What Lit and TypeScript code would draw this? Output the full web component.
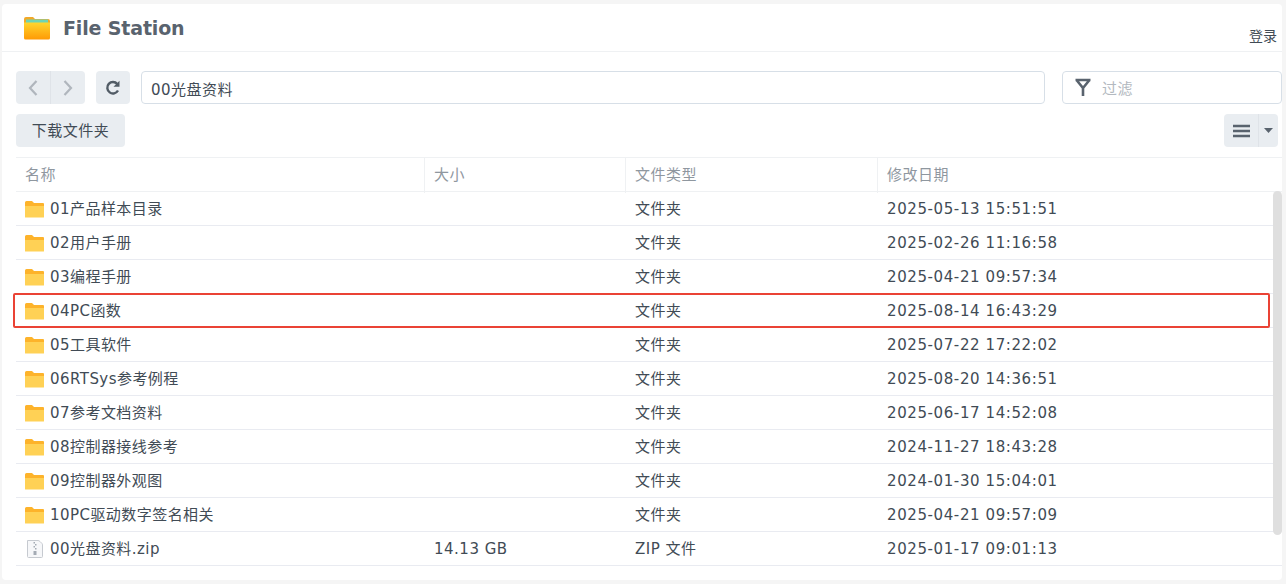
import { LitElement, html, css, svg } from 'lit';
import { customElement } from 'lit/decorators.js';

interface Row {
  name: string;
  size?: string;
  type: string;
  date: string;
  zip?: boolean;
}

const ROWS: Row[] = [
  { name: '01产品样本目录', type: '文件夹', date: '2025-05-13 15:51:51' },
  { name: '02用户手册', type: '文件夹', date: '2025-02-26 11:16:58' },
  { name: '03编程手册', type: '文件夹', date: '2025-04-21 09:57:34' },
  { name: '04PC函数', type: '文件夹', date: '2025-08-14 16:43:29' },
  { name: '05工具软件', type: '文件夹', date: '2025-07-22 17:22:02' },
  { name: '06RTSys参考例程', type: '文件夹', date: '2025-08-20 14:36:51' },
  { name: '07参考文档资料', type: '文件夹', date: '2025-06-17 14:52:08' },
  { name: '08控制器接线参考', type: '文件夹', date: '2024-11-27 18:43:28' },
  { name: '09控制器外观图', type: '文件夹', date: '2024-01-30 15:04:01' },
  { name: '10PC驱动数字签名相关', type: '文件夹', date: '2025-04-21 09:57:09' },
  { name: '00光盘资料.zip', size: '14.13 GB', type: 'ZIP 文件', date: '2025-01-17 09:01:13', zip: true },
];

const folderIcon = svg`<svg class="ficon" width="19" height="18" viewBox="0 0 19 18">
  <path d="M0 2.5 Q0 1 1.5 1 H7 L9 3 H18 Q19 3 19 4 V7 H0 Z" fill="#fdb32b"/>
  <path d="M0 6 H19 V17 Q19 17.500 18.500 17.500 H.5 Q0 17.500 0 17 Z" fill="#ffd155"/>
</svg>`;

const zipIcon = svg`<svg class="ficon" width="19" height="18" viewBox="0 0 19 18">
  <path d="M2.500 .5 H13 Q14 .5 15 1.500 L17 3.500 Q17.500 4 17.500 5 V16.500 Q17.500 17.500 16.500 17.500 H3.500 Q2.500 17.500 2.500 16.500 Z" fill="#f6f7f9" stroke="#c6cad0"/>
  <path d="M8.500 2 H10 V3.500 H8.500 Z M10 4 H11.500 V5.500 H10 Z M8.500 6 H10 V7.500 H8.500 Z M10 8 H11.500 V9.500 H10 Z M8.500 11 H11.500 V15 H8.500 Z" fill="#a4abb4"/>
</svg>`;

@customElement('app-root')
export class AppRoot extends LitElement {
  static styles = css`
    :host {
      display: block;
      height: 584px;
      box-sizing: border-box;
      padding: 4px 4px 4px 2px;
      background: #f5f5f5;
      font-family: 'DejaVu Sans', 'Noto Sans CJK SC', sans-serif;
      color: #414b55;
      overflow: hidden;
    }
    .card {
      position: relative;
      height: 100%;
      background: #fff;
      border-radius: 4px;
      overflow: hidden;
    }
    .header {
      display: flex;
      align-items: center;
      height: 48px;
      box-sizing: border-box;
      border-bottom: 1px solid #eff1f3;
      padding-left: 21px;
      position: relative;
    }
    .title {
      margin-left: 12px;
      font-size: 19px;
      font-weight: 700;
      letter-spacing: -0.15px;
      color: #59636e;
    }
    .login {
      position: absolute;
      right: 5px;
      top: 21px;
      font-size: 14px;
      color: #414b55;
    }
    .toolbar {
      display: flex;
      gap: 11px;
      padding: 19px 0 0 14px;
      height: 33px;
    }
    .nav {
      display: flex;
      width: 69px;
      height: 33px;
      background: #e9edf1;
      border-radius: 4px;
    }
    .nav span {
      flex: 1;
      display: flex;
      align-items: center;
      justify-content: center;
    }
    .nav span + span {
      border-left: 1px solid #dfe3e8;
    }
    .refresh {
      width: 34px;
      height: 33px;
      background: #e9edf1;
      border-radius: 4px;
      display: flex;
      align-items: center;
      justify-content: center;
    }
    .path {
      width: 904px;
      height: 33px;
      box-sizing: border-box;
      border: 1px solid #d7dfe7;
      border-radius: 4px;
      padding-left: 9px;
      font-size: 15px;
      line-height: 37px;
      letter-spacing: 0.5px;
    }
    .filter {
      flex: 1;
      margin-left: 6px;
      height: 33px;
      box-sizing: border-box;
      border: 1px solid #d7dfe7;
      border-radius: 4px;
      display: flex;
      align-items: center;
      padding-left: 11px;
      gap: 10px;
      font-size: 15px;
      color: #b3b9c0;
      letter-spacing: 0.5px;
    }
    .actions {
      display: flex;
      justify-content: space-between;
      padding: 10px 4px 0 14px;
      height: 33px;
    }
    .download {
      width: 109px;
      height: 33px;
      background: #e9edf1;
      border-radius: 4px;
      font-size: 15px;
      letter-spacing: 0.5px;
      line-height: 35px;
      text-align: center;
      color: #414b55;
    }
    .view {
      display: flex;
      width: 54px;
      height: 33px;
      background: #e9edf1;
      border-radius: 4px;
    }
    .view span {
      display: flex;
      align-items: center;
      justify-content: center;
    }
    .view .list {
      width: 34px;
    }
    .view .caret {
      flex: 1;
      border-left: 1px solid #dfe3e8;
    }
    .table {
      margin: 10px 0 0 14px;
      border-top: 1px solid #eff1f3;
    }
    .row {
      display: grid;
      grid-template-columns: 408px 201px 252px 1fr;
      height: 34px;
      box-sizing: border-box;
      align-items: center;
      border-bottom: 1px solid #e9ebf1;
      font-size: 15px;
      letter-spacing: 0.5px;
      color: #414b55;
    }
    .row.head {
      color: #8f979f;
      border-bottom: 1px solid #eff1f3;
    }
    .row.head div {
      height: 100%;
      line-height: 35px;
      border-left: 1px solid #eff1f3;
      padding-left: 9px;
    }
    .row.head div:first-child {
      border-left: none;
    }
    .cell {
      padding-left: 10px;
      white-space: nowrap;
    }
    /* the CJK fallback sits lower in its line box, so these cells need a lift */
    .cjk {
      padding-bottom: 3px;
    }
    .date {
      letter-spacing: 0.6px;
    }
    .namecell {
      display: flex;
      align-items: center;
      gap: 6px;
      padding-left: 9px;
      white-space: nowrap;
      letter-spacing: 0.45px;
    }
    .namecell span {
      padding-bottom: 3px;
    }
    .ficon {
      flex: none;
    }
    .scrollbar {
      position: absolute;
      right: 0;
      top: 187px;
      width: 9px;
      height: 344px;
      background: #dfdfdf;
      border-radius: 5px;
    }
    .mark {
      position: absolute;
      left: 11px;
      top: 289px;
      width: 1257px;
      height: 35px;
      box-sizing: border-box;
      border: 2px solid #ea4335;
      border-radius: 2px;
    }
  `;

  private renderRow(r: Row) {
    return html`<div class="row">
      <div class="namecell">${r.zip ? zipIcon : folderIcon}<span>${r.name}</span></div>
      <div class="cell">${r.size ?? ''}</div>
      <div class="cell cjk">${r.type}</div>
      <div class="cell date">${r.date}</div>
    </div>`;
  }

  render() {
    return html`<div class="card">
      <div class="header">
        <svg width="28" height="24" viewBox="0 0 28 24">
          <path d="M1 3 Q1 1 3 1 H10 L12 3 H25 Q27 3 27 5 V10 H1 Z" fill="#f1a828"/>
          <rect x="3" y="3.5" width="22" height="6" fill="#6fd3b4"/>
          <defs><linearGradient id="fg" x1="0" y1="0" x2="0" y2="1">
            <stop offset="0" stop-color="#ffd62e"/><stop offset="1" stop-color="#ff9a05"/>
          </linearGradient></defs>
          <path d="M1 6.5 H27 V22 Q27 23.500 25.500 23.500 H2.500 Q1 23.500 1 22 Z" fill="url(#fg)"/>
        </svg>
        <span class="title">File Station</span>
        <span class="login">登录</span>
      </div>
      <div class="toolbar">
        <div class="nav">
          <span><svg width="12" height="18" viewBox="0 0 12 18"><path d="M9.500 2 L3 9 L9.500 16" fill="none" stroke="#b0b6bd" stroke-width="2.200"/></svg></span>
          <span><svg width="12" height="18" viewBox="0 0 12 18"><path d="M2.500 2 L9 9 L2.500 16" fill="none" stroke="#b0b6bd" stroke-width="2.200"/></svg></span>
        </div>
        <div class="refresh">
          <svg width="16" height="16" viewBox="0 0 16 16"><path d="M13 10.500 A5.700 5.700 0 1 1 12.300 4" fill="none" stroke="#525c66" stroke-width="2.400"/><path d="M14.500 .8 V6.800 H8.500 Z" fill="#525c66"/></svg>
        </div>
        <div class="path">00光盘资料</div>
        <div class="filter">
          <svg width="18" height="19" viewBox="0 0 18 19"><path d="M1.500 2 H16.500 M2.500 2 L9 10 L15.500 2 M9 9 V18" fill="none" stroke="#59636e" stroke-width="2.600"/></svg>
          <span>过滤</span>
        </div>
      </div>
      <div class="actions">
        <div class="download">下载文件夹</div>
        <div class="view">
          <span class="list"><svg width="18" height="14" viewBox="0 0 18 14"><path d="M1 2 H18 M1 7 H18 M1 12 H18" stroke="#59636e" stroke-width="2.400"/></svg></span>
          <span class="caret"><svg width="9" height="5" viewBox="0 0 9 5"><path d="M0 0 H9 L4.500 5 Z" fill="#59636e"/></svg></span>
        </div>
      </div>
      <div class="table">
        <div class="row head"><div>名称</div><div>大小</div><div>文件类型</div><div>修改日期</div></div>
        ${ROWS.map((r) => this.renderRow(r))}
      </div>
      <div class="scrollbar"></div>
      <div class="mark"></div>
    </div>`;
  }
}
